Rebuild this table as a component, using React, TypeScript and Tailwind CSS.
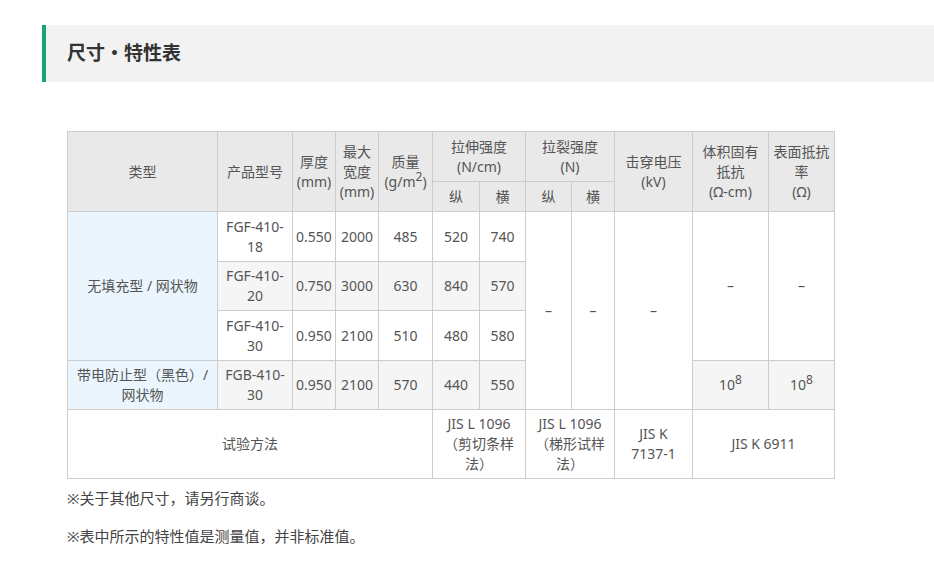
const th = "border border-[#cccccc] bg-[#e9e9e9] font-normal text-center align-middle px-[2px]";
const td = "border border-[#cccccc] text-center align-middle px-[2px] whitespace-nowrap";
const sup = "relative -top-[6px] text-[12px] leading-none";

const rows = [
  { model: ["FGF-410-", "18"], t: "0.550", w: "2000", m: "485", a: "520", b: "740", gray: false, h: "h-[50px]" },
  { model: ["FGF-410-", "20"], t: "0.750", w: "3000", m: "630", a: "840", b: "570", gray: true, h: "h-[49px]" },
  { model: ["FGF-410-", "30"], t: "0.950", w: "2100", m: "510", a: "480", b: "580", gray: false, h: "h-[50px]" },
];

const App = () => {
  return (
    <div
      className="min-h-[565px] bg-white pl-[42px] pt-[25px] text-[#555]"
      style={{ fontFamily: '"Noto Sans", "Noto Sans CJK SC", sans-serif' }}
    >
      <div className="flex h-[57px] items-center border-l-4 border-[#17a578] bg-[#f2f2f2] pl-[21px]">
        <h2 className="text-[19px] font-bold text-[#333]">尺寸・特性表</h2>
      </div>

      <div className="pl-[25px] pt-[49px]">
        <table className="w-[767px] table-fixed border-collapse text-[14px] leading-[20px]">
          <colgroup>
            <col className="w-[150px]" />
            <col className="w-[75px]" />
            <col className="w-[43px]" />
            <col className="w-[43px]" />
            <col className="w-[54px]" />
            <col className="w-[47px]" />
            <col className="w-[46px]" />
            <col className="w-[46px]" />
            <col className="w-[43px]" />
            <col className="w-[78px]" />
            <col className="w-[76px]" />
            <col className="w-[66px]" />
          </colgroup>
          <thead>
            <tr className="h-[50px]">
              <th rowSpan={2} className={th}>类型</th>
              <th rowSpan={2} className={th}>产品型号</th>
              <th rowSpan={2} className={th}>厚度<br />(mm)</th>
              <th rowSpan={2} className={th}>最大<br />宽度<br />(mm)</th>
              <th rowSpan={2} className={th}>质量<br />(g/m<span className={sup}>2</span>)</th>
              <th colSpan={2} className={th}>拉伸强度<br />(N/cm)</th>
              <th colSpan={2} className={th}>拉裂强度<br />(N)</th>
              <th rowSpan={2} className={th}>击穿电压<br />(kV)</th>
              <th rowSpan={2} className={th}>体积固有<br />抵抗<br />(Ω-cm)</th>
              <th rowSpan={2} className={th}>表面抵抗<br />率<br />(Ω)</th>
            </tr>
            <tr className="h-[30px]">
              <th className={th}>纵</th>
              <th className={th}>横</th>
              <th className={th}>纵</th>
              <th className={th}>横</th>
            </tr>
          </thead>
          <tbody>
            {rows.map((r, i) => {
              const bg = r.gray ? " bg-[#f5f5f5]" : "";
              return (
                <tr key={i} className={r.h}>
                  {i === 0 && (
                    <td rowSpan={3} className={td + " bg-[#eaf5fd]"}>无填充型 / 网状物</td>
                  )}
                  <td className={td + bg}>{r.model[0]}<br />{r.model[1]}</td>
                  <td className={td + bg}>{r.t}</td>
                  <td className={td + bg}>{r.w}</td>
                  <td className={td + bg}>{r.m}</td>
                  <td className={td + bg}>{r.a}</td>
                  <td className={td + bg}>{r.b}</td>
                  {i === 0 && (
                    <>
                      <td rowSpan={4} className={td}>–</td>
                      <td rowSpan={4} className={td}>–</td>
                      <td rowSpan={4} className={td}>–</td>
                      <td rowSpan={3} className={td}>–</td>
                      <td rowSpan={3} className={td}>–</td>
                    </>
                  )}
                </tr>
              );
            })}
            <tr className="h-[49px]">
              <td className={td + " bg-[#eaf5fd]"}>带电防止型（黑色）/<br />网状物</td>
              <td className={td + " bg-[#f5f5f5]"}>FGB-410-<br />30</td>
              <td className={td + " bg-[#f5f5f5]"}>0.950</td>
              <td className={td + " bg-[#f5f5f5]"}>2100</td>
              <td className={td + " bg-[#f5f5f5]"}>570</td>
              <td className={td + " bg-[#f5f5f5]"}>440</td>
              <td className={td + " bg-[#f5f5f5]"}>550</td>
              <td className={td + " bg-[#f5f5f5]"}>10<span className={sup}>8</span></td>
              <td className={td + " bg-[#f5f5f5]"}>10<span className={sup}>8</span></td>
            </tr>
            <tr className="h-[69px]">
              <td colSpan={5} className={td}>试验方法</td>
              <td colSpan={2} className={td}>JIS L 1096<br />（剪切条样<br />法）</td>
              <td colSpan={2} className={td}>JIS L 1096<br />（梯形试样<br />法）</td>
              <td className={td}>JIS K<br />7137-1</td>
              <td colSpan={2} className={td}>JIS K 6911</td>
            </tr>
          </tbody>
        </table>

        <p className="mt-[7px] text-[15px] leading-[24px] text-[#444]">※关于其他尺寸，请另行商谈。</p>
        <p className="mt-[14px] text-[15px] leading-[24px] text-[#444]">※表中所示的特性值是测量值，并非标准值。</p>
      </div>
    </div>
  );
};

export default App;
